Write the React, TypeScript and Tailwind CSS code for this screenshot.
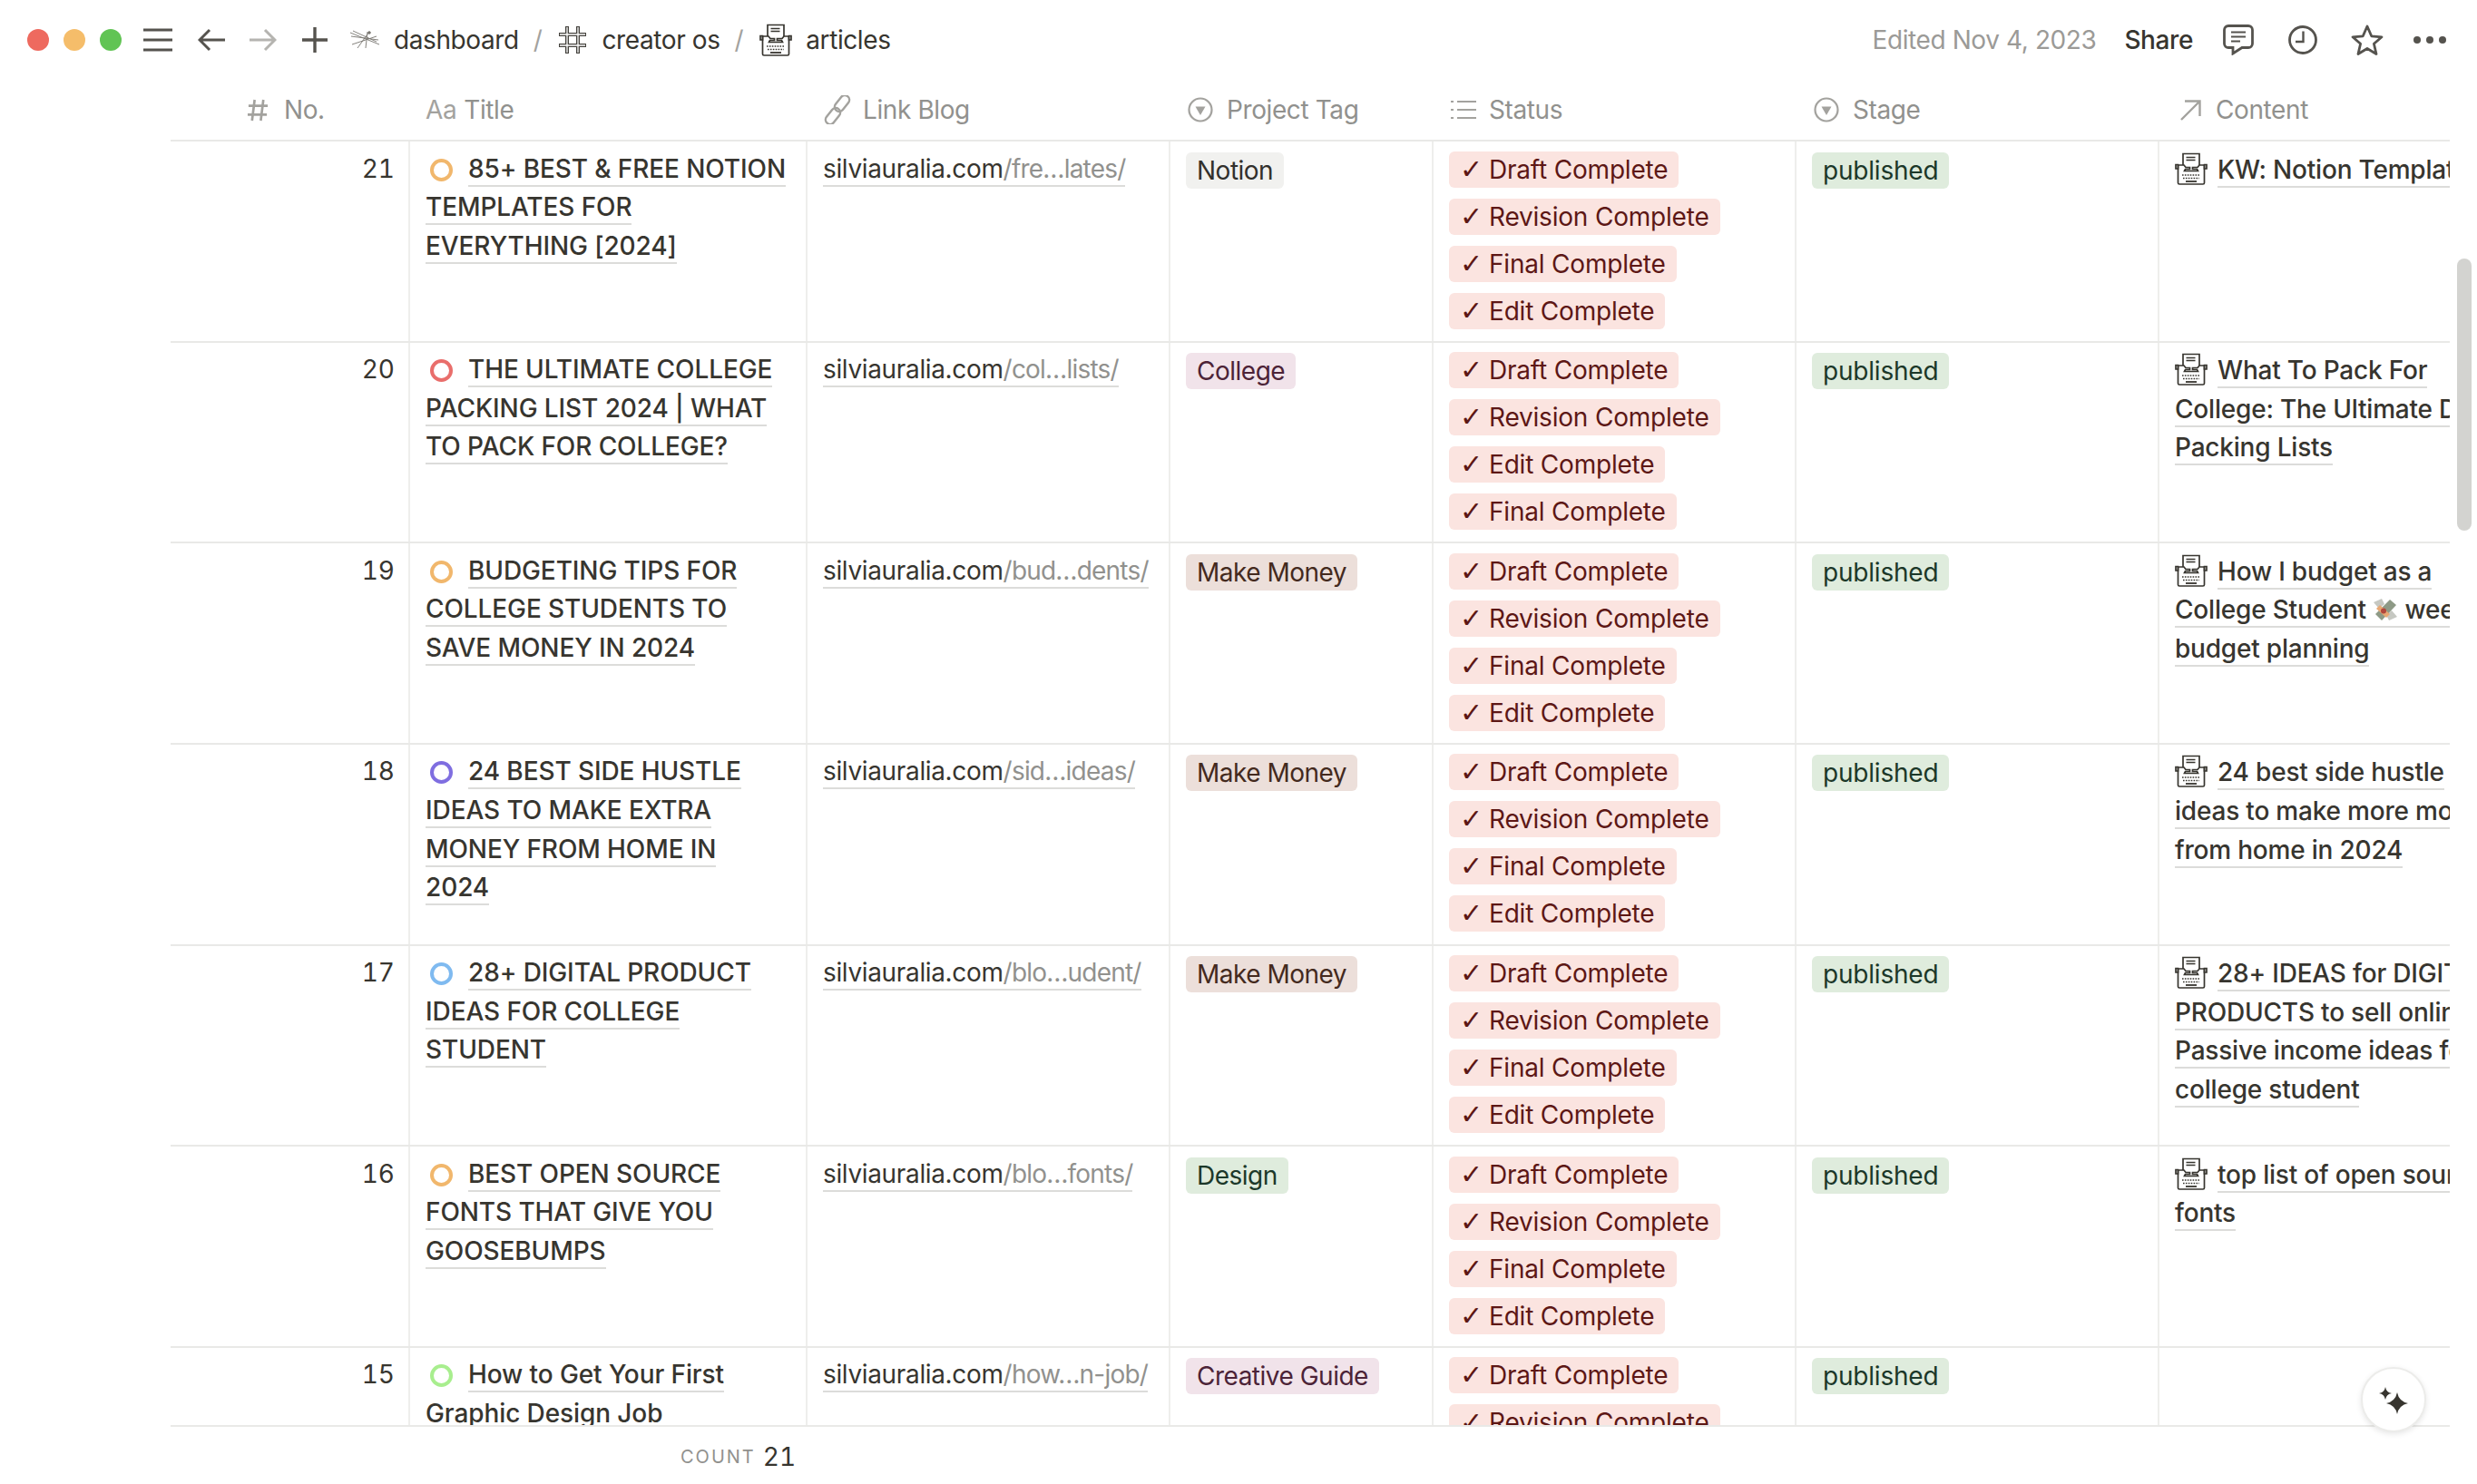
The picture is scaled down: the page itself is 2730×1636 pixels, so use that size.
import { ReactNode } from "react";

const ink = "#37352f";

function Typewriter({ className }: { className: string }) {
  return (
    <svg viewBox="0 0 36 36" fill="none" stroke={ink} strokeWidth="1.7" className={className}>
      <path d="M9 14V1.500h18V14" />
      <path d="M12.500 5.500h10M12.500 8.500h10" strokeWidth="1.300" />
      <path d="M3.500 14h6.500l2 2.500h4.500v2h-5l-1 2h15l-1-2h-5v-2H25l2-2.500h5.500" />
      <path d="M1 13.500h2.500V18H1zM32.500 13.500H35V18h-2.500z" />
      <path d="M3.500 14v19.500a1.500 1.500 0 0 0 1.500 1.500h26a1.500 1.500 0 0 0 1.500-1.500V14" />
      <path d="M8 25h20M9 28.500h18" strokeWidth="1.600" strokeDasharray="1.600 1.300" />
      <path d="M12 32h12" strokeWidth="1.800" />
    </svg>
  );
}

function Money() {
  return (
    <svg viewBox="0 0 28 28" className="inline-block h-[28px] w-[28px] align-[-4px]">
      <path d="M1 6l9-4 3 6-6 5z" fill="#c6c8c2" />
      <path d="M27 22l-9 4-3-6 6-5z" fill="#c6c8c2" />
      <path d="M3 19L19 3l7 6L10 26z" fill="#8e9a86" />
      <path d="M8 9l11 10-4 4L4 13z" fill="#e8a873" />
      <circle cx="12" cy="15.500" r="3" fill="#b2483c" />
    </svg>
  );
}

function HeaderIcon({ kind }: { kind: string }) {
  if (kind === "hash")
    return (
      <svg viewBox="0 0 26 28" fill="none" stroke="#a3a29e" strokeWidth="2.800" className="mr-[16px] h-[27px] w-[25px]">
        <path d="M9 2L6 26M19 2l-3 24M2 9h22M1 19h22" />
      </svg>
    );
  if (kind === "aa") return <span className="mr-[8px] text-[#a3a29e]">Aa</span>;
  if (kind === "link")
    return (
      <svg viewBox="0 0 30 32" fill="none" stroke="#a3a29e" strokeWidth="2.400" className="mr-[13px] h-[32px] w-[30px]">
        <rect x="15" y="-1" width="10" height="20" rx="5" transform="rotate(38 20 9)" />
        <rect x="5" y="13" width="10" height="20" rx="5" transform="rotate(38 10 23)" />
      </svg>
    );
  if (kind === "select")
    return (
      <svg viewBox="0 0 28 28" fill="none" className="mr-[15px] h-[28px] w-[28px]">
        <circle cx="14" cy="14" r="12.500" stroke="#a3a29e" strokeWidth="2.200" />
        <path d="M8.500 10.500h11L14 20z" fill="#a3a29e" />
      </svg>
    );
  if (kind === "list")
    return (
      <svg viewBox="0 0 30 24" fill="none" stroke="#a3a29e" strokeWidth="2.200" className="mr-[13px] h-[24px] w-[30px]">
        <path d="M8 3h21M8 12h21M8 21h21" />
        <path d="M1 3h3M1 12h3M1 21h3" />
      </svg>
    );
  return (
    <svg viewBox="0 0 24 24" fill="none" stroke="#a3a29e" strokeWidth="2.400" className="mr-[16px] h-[24px] w-[24px]">
      <path d="M2 23L22 3M6 2.500h16.500V19" />
    </svg>
  );
}

function Tag({ bg, fg, children }: { bg: string; fg: string; children: ReactNode }) {
  return (
    <span
      className="inline-block h-[40px] whitespace-nowrap rounded-[6px] px-[12px] leading-[40px]"
      style={{ backgroundColor: bg, color: fg }}
    >
      {children}
    </span>
  );
}

function Under({ children }: { children: ReactNode }) {
  return <span className="border-b-2 border-[#dcdcda] pb-[1px]">{children}</span>;
}

const tagColors: Record<string, [string, string]> = {
  Notion: ["#f1f1ef", "#32302c"],
  College: ["#f1e3ea", "#4c2337"],
  "Make Money": ["#ecdfda", "#442a1e"],
  Design: ["#dfecdd", "#1c3829"],
  "Creative Guide": ["#f1e3ea", "#4c2337"],
};

const normal = ["Draft", "Revision", "Final", "Edit"];

const rows = [
  {
    no: 21,
    dot: "#f1b76c",
    title: ["85+ BEST & FREE NOTION", "TEMPLATES FOR", "EVERYTHING [2024]"],
    slug: "/fre…lates/",
    tag: "Notion",
    status: normal,
    content: ["KW: Notion Templates"] as ReactNode[],
  },
  {
    no: 20,
    dot: "#e96e6b",
    title: ["THE ULTIMATE COLLEGE", "PACKING LIST 2024 | WHAT", "TO PACK FOR COLLEGE?"],
    slug: "/col…lists/",
    tag: "College",
    status: ["Draft", "Revision", "Edit", "Final"],
    content: ["What To Pack For", "College: The Ultimate Dorm", "Packing Lists"] as ReactNode[],
  },
  {
    no: 19,
    dot: "#f1b76c",
    title: ["BUDGETING TIPS FOR", "COLLEGE STUDENTS TO", "SAVE MONEY IN 2024"],
    slug: "/bud…dents/",
    tag: "Make Money",
    status: normal,
    content: [
      "How I budget as a",
      <>
        College Student <Money /> weekly
      </>,
      "budget planning",
    ] as ReactNode[],
  },
  {
    no: 18,
    dot: "#7f6ee0",
    title: ["24 BEST SIDE HUSTLE", "IDEAS TO MAKE EXTRA", "MONEY FROM HOME IN", "2024"],
    slug: "/sid…ideas/",
    tag: "Make Money",
    status: normal,
    content: ["24 best side hustle", "ideas to make more money", "from home in 2024"] as ReactNode[],
  },
  {
    no: 17,
    dot: "#7fbaf0",
    title: ["28+ DIGITAL PRODUCT", "IDEAS FOR COLLEGE", "STUDENT"],
    slug: "/blo…udent/",
    tag: "Make Money",
    status: normal,
    content: ["28+ IDEAS for DIGITAL", "PRODUCTS to sell online", "Passive income ideas for", "college student"] as ReactNode[],
  },
  {
    no: 16,
    dot: "#f1b76c",
    title: ["BEST OPEN SOURCE", "FONTS THAT GIVE YOU", "GOOSEBUMPS"],
    slug: "/blo…fonts/",
    tag: "Design",
    status: normal,
    content: ["top list of open source", "fonts"] as ReactNode[],
  },
  {
    no: 15,
    dot: "#a8ee8e",
    title: ["How to Get Your First", "Graphic Design Job"],
    slug: "/how…n-job/",
    tag: "Creative Guide",
    status: normal,
    content: [] as ReactNode[],
  },
];

function Row({ row }: { row: (typeof rows)[number] }) {
  const [bg, fg] = tagColors[row.tag];
  return (
    <div className="flex h-[221.67px] shrink-0 border-b-2 border-[#e9e9e7] text-[28px] leading-[42.6px] text-[#37352f]">
      <div className="w-[264px] shrink-0 border-r-2 border-[#eeeeec] pr-[15px] pt-[8.5px] text-right tabular-nums">{row.no}</div>
      <div className="w-[438px] shrink-0 border-r-2 border-[#eeeeec] pl-[17px] pt-[8.5px] font-medium tracking-[-0.1px] whitespace-nowrap">
        {row.title.map((line, i) => (
          <div key={i}>
            {i === 0 && (
              <span
                className="mr-[17px] ml-[5px] inline-block h-[25px] w-[25px] rounded-full border-[4px] align-[-4px]"
                style={{ borderColor: row.dot }}
              />
            )}
            <Under>{line}</Under>
          </div>
        ))}
      </div>
      <div className="w-[400px] shrink-0 border-r-2 border-[#eeeeec] pl-[17px] pt-[8.5px] tracking-[-0.35px] whitespace-nowrap">
        <Under>
          silviauralia.com<span className="tracking-[-0.8px] text-[#91918e]">{row.slug}</span>
        </Under>
      </div>
      <div className="w-[290px] shrink-0 border-r-2 border-[#eeeeec] pl-[17px] pt-[10.5px] tracking-[-0.5px]">
        <Tag bg={bg} fg={fg}>
          {row.tag}
        </Tag>
      </div>
      <div className="flex w-[400px] shrink-0 flex-col items-start gap-[12px] border-r-2 border-[#eeeeec] pl-[17px] pt-[10.5px] tracking-[-0.2px]">
        {row.status.map((s) => (
          <Tag key={s} bg="#fbe4e0" fg="#5d1715">
            <span className="inline-block w-[32px] text-left font-['DejaVu_Sans',sans-serif] text-[30px] leading-[30px]">✓</span>
            {s} Complete
          </Tag>
        ))}
      </div>
      <div className="w-[400px] shrink-0 border-r-2 border-[#eeeeec] pl-[17px] pt-[10.5px] tracking-[-0.2px]">
        <Tag bg="#dfecdd" fg="#1c3829">
          published
        </Tag>
      </div>
      <div className="min-w-0 flex-1 overflow-hidden pl-[17px] pt-[9.5px] font-medium tracking-[-0.2px] whitespace-nowrap">
        {row.content.map((line, i) => (
          <div key={i}>
            {i === 0 && <Typewriter className="mr-[11px] inline-block h-[36px] w-[36px] align-[-7px]" />}
            <Under>{line}</Under>
          </div>
        ))}
      </div>
    </div>
  );
}

const columns = [
  { w: "w-[264px] pl-[84px]", icon: "hash", label: "No." },
  { w: "w-[438px] pl-[17px]", icon: "aa", label: "Title" },
  { w: "w-[400px] pl-[18px]", icon: "link", label: "Link Blog" },
  { w: "w-[290px] pl-[19px]", icon: "select", label: "Project Tag" },
  { w: "w-[400px] pl-[18px]", icon: "list", label: "Status" },
  { w: "w-[400px] pl-[19px]", icon: "select", label: "Stage" },
  { w: "w-[320px] pl-[22px]", icon: "arrow", label: "Content" },
];

export default function App() {
  return (
    <div className="relative flex h-[1636px] w-[2730px] flex-col overflow-hidden bg-white font-['Inter',sans-serif] text-[#37352f]">
      {/* title bar */}
      <div className="flex h-[88px] shrink-0 items-center pl-[30px] pr-[34px] text-[28px] tracking-[-0.4px]">
        <div className="flex gap-[16px]">
          <span className="h-[24px] w-[24px] rounded-full bg-[#ee6a5f]" />
          <span className="h-[24px] w-[24px] rounded-full bg-[#f5bd6a]" />
          <span className="h-[24px] w-[24px] rounded-full bg-[#61c454]" />
        </div>
        <svg viewBox="0 0 32 26" fill="none" stroke="#55534e" strokeWidth="3" className="ml-[24px] h-[26px] w-[32px]">
          <path d="M0 2h32M0 13h32M0 24h32" />
        </svg>
        <svg viewBox="0 0 30 26" fill="none" stroke="#55534e" strokeWidth="3" className="ml-[28px] h-[26px] w-[30px]">
          <path d="M30 13H3M13 2L2 13l11 11" />
        </svg>
        <svg viewBox="0 0 30 26" fill="none" stroke="#b5b4b0" strokeWidth="3" className="ml-[27px] h-[26px] w-[30px]">
          <path d="M0 13h27M17 2l11 11-11 11" />
        </svg>
        <svg viewBox="0 0 28 28" fill="none" stroke="#55534e" strokeWidth="3.400" className="ml-[28px] h-[28px] w-[28px]">
          <path d="M14 0v28M0 14h28" />
        </svg>
        <svg viewBox="0 0 34 24" fill="none" stroke="#77756f" strokeWidth="0.900" className="ml-[24px] h-[24px] w-[34px]">
          <path d="M1 4l32 13M2 8l30 4M4 2l26 12M22 3L9 21M20 3l-2 18M3 17l27-9" />
          <circle cx="22" cy="4" r="1.300" fill="#77756f" />
        </svg>
        <span className="ml-[15px]">dashboard</span>
        <span className="ml-[16px] text-[#a3a29e]">/</span>
        <svg viewBox="0 0 32 32" fill="none" className="ml-[18px] h-[32px] w-[32px]">
          <path d="M10 1v30M22 1v30M1 10h30M1 22h30" stroke="#45433e" strokeWidth="4" />
          <path d="M10 2v28M22 2v28M2 10h28M2 22h28" stroke="#fff" strokeWidth="1.300" />
        </svg>
        <span className="ml-[16px]">creator os</span>
        <span className="ml-[16px] text-[#a3a29e]">/</span>
        <Typewriter className="ml-[18px] h-[36px] w-[36px]" />
        <span className="ml-[15px]">articles</span>
        <span className="ml-auto text-[#9b9a97]">Edited Nov 4, 2023</span>
        <span className="ml-[31px] font-medium">Share</span>
        <svg viewBox="0 0 34 34" fill="none" stroke="#55534e" strokeWidth="2.800" className="ml-[33px] h-[34px] w-[34px]">
          <path d="M6 1.500h22a4.500 4.500 0 0 1 4.500 4.500v15a4.500 4.500 0 0 1-4.500 4.500h-7L11 32v-6.500H6A4.500 4.500 0 0 1 1.500 21V6A4.500 4.500 0 0 1 6 1.500z" />
          <path d="M9 8.500h16M9 13.500h16M9 18.500h10" strokeWidth="2.200" />
        </svg>
        <svg viewBox="0 0 32 32" fill="none" stroke="#55534e" strokeWidth="2.800" className="ml-[38px] h-[32px] w-[32px]">
          <circle cx="16" cy="16" r="14.500" />
          <path d="M16.500 6.500V18H8" strokeWidth="2.400" />
        </svg>
        <svg viewBox="0 0 36 34" fill="none" stroke="#55534e" strokeWidth="2.800" strokeLinejoin="round" className="ml-[37px] h-[34px] w-[36px]">
          <path d="M18 2l4.700 10.800 11.300 1-8.600 7.500 2.600 11.200L18 26.500 8 32.500l2.600-11.200L2 13.800l11.300-1z" />
        </svg>
        <div className="ml-[33px] flex gap-[6px]">
          <span className="h-[8px] w-[8px] rounded-full bg-[#55534e]" />
          <span className="h-[8px] w-[8px] rounded-full bg-[#55534e]" />
          <span className="h-[8px] w-[8px] rounded-full bg-[#55534e]" />
        </div>
      </div>

      {/* table */}
      <div className="flex min-h-0 flex-1 flex-col pl-[188px] pr-[30px]">
        <div className="flex h-[68px] shrink-0 items-center border-b-2 border-[#e9e9e7] text-[28px] tracking-[-0.4px] text-[#91918e]">
          {columns.map((c) => (
            <div key={c.label} className={`flex shrink-0 items-center ${c.w}`}>
              <HeaderIcon kind={c.icon} />
              {c.label}
            </div>
          ))}
        </div>
        <div className="flex h-[1417px] shrink-0 flex-col overflow-hidden border-b-2 border-[#e9e9e7]">
          {rows.map((r) => (
            <Row key={r.no} row={r} />
          ))}
        </div>
        <div className="flex flex-1 items-center pl-[562px] pt-[2px]">
          <span className="text-[20px] tracking-[2px] text-[#91918e]">COUNT</span>
          <span className="ml-[8px] text-[28px] tabular-nums">21</span>
        </div>
      </div>

      {/* scrollbar thumb */}
      <div className="absolute left-[2708px] top-[285px] h-[300px] w-[16px] rounded-full bg-[#d3d3d0]" />

      {/* floating AI button */}
      <div className="absolute left-[2602px] top-[1507px] flex h-[72px] w-[72px] items-center justify-center rounded-full border-2 border-[#ececea] bg-white shadow-[0_2px_6px_rgba(0,0,0,0.1)]">
        <svg viewBox="0 0 36 36" fill="#37352f" className="h-[36px] w-[36px]">
          <path d="M9 4Q10 10 16 11 10 12 9 18 8 12 2 11 8 10 9 4z" />
          <path d="M22 10Q24 20 34 22 24 24 22 34 20 24 10 22 20 20 22 10z" />
        </svg>
      </div>
    </div>
  );
}
